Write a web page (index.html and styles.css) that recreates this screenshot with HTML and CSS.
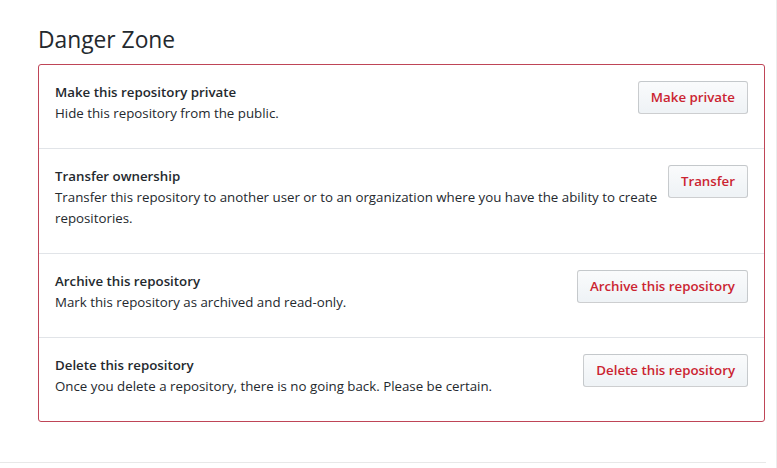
FILE: index.html
```html
<!DOCTYPE html>
<html lang="en">
<head>
<meta charset="utf-8">
<title>Danger Zone</title>
<link rel="stylesheet" href="styles.css">
</head>
<body>
<div class="page">
  <div class="settings">
    <h2 class="subhead">Danger Zone</h2>
    <div class="box box-danger">
      <div class="box-row">
        <button class="btn btn-danger">Make private</button>
        <strong class="row-title">Make this repository private</strong>
        <p class="row-desc">Hide this repository from the public.</p>
      </div>
      <div class="box-row">
        <button class="btn btn-danger">Transfer</button>
        <strong class="row-title">Transfer ownership</strong>
        <p class="row-desc">Transfer this repository to another user or to an organization where you have the ability to create repositories.</p>
      </div>
      <div class="box-row">
        <button class="btn btn-danger">Archive this repository</button>
        <strong class="row-title">Archive this repository</strong>
        <p class="row-desc">Mark this repository as archived and read-only.</p>
      </div>
      <div class="box-row">
        <button class="btn btn-danger">Delete this repository</button>
        <strong class="row-title">Delete this repository</strong>
        <p class="row-desc">Once you delete a repository, there is no going back. Please be certain.</p>
      </div>
    </div>
  </div>
</div>
</body>
</html>
```
FILE: styles.css
```css
* { box-sizing: border-box; }
html, body { margin: 0; padding: 0; background: #fff; }
body {
  font-family: "Open Sans", "Noto Sans", "Liberation Sans", sans-serif;
  font-size: 13.3px;
  line-height: 21px;
  color: #24292e;
}
.page {
  width: 777px;
  height: 468px;
  border-right: 1px solid #ececec;
  padding-right: 10px;
}
.settings {
  padding: 25px 1px 40px 38px;
  border-bottom: 1px solid #e8e8e8;
}
.subhead {
  margin: 0 0 9px 0;
  font-size: 22.8px;
  font-weight: 400;
  line-height: 30px;
  color: #24292e;
}
.box {
  border: 1px solid #bf4557;
  border-radius: 3px;
}
.box-row {
  padding: 16px;
  border-top: 1px solid #e1e4e8;
}
.box-row::after { content: ""; display: table; clear: both; }
.box-row:first-child { border-top: 0; }
.row-title {
  display: block;
  padding-top: 1px;
  font-weight: 600;
}
.row-desc {
  margin: 0 0 8px 0;
}
.btn {
  float: right;
  margin-left: 4px;
  padding: 5px 12px;
  font-family: inherit;
  font-size: 13.3px;
  font-weight: 600;
  line-height: 21px;
  border: 1px solid rgba(27,31,35,.2);
  border-radius: 3px;
  background: linear-gradient(-180deg, #fafbfc 0%, #eff3f6 90%);
  color: #cb2431;
  cursor: pointer;
}
```
